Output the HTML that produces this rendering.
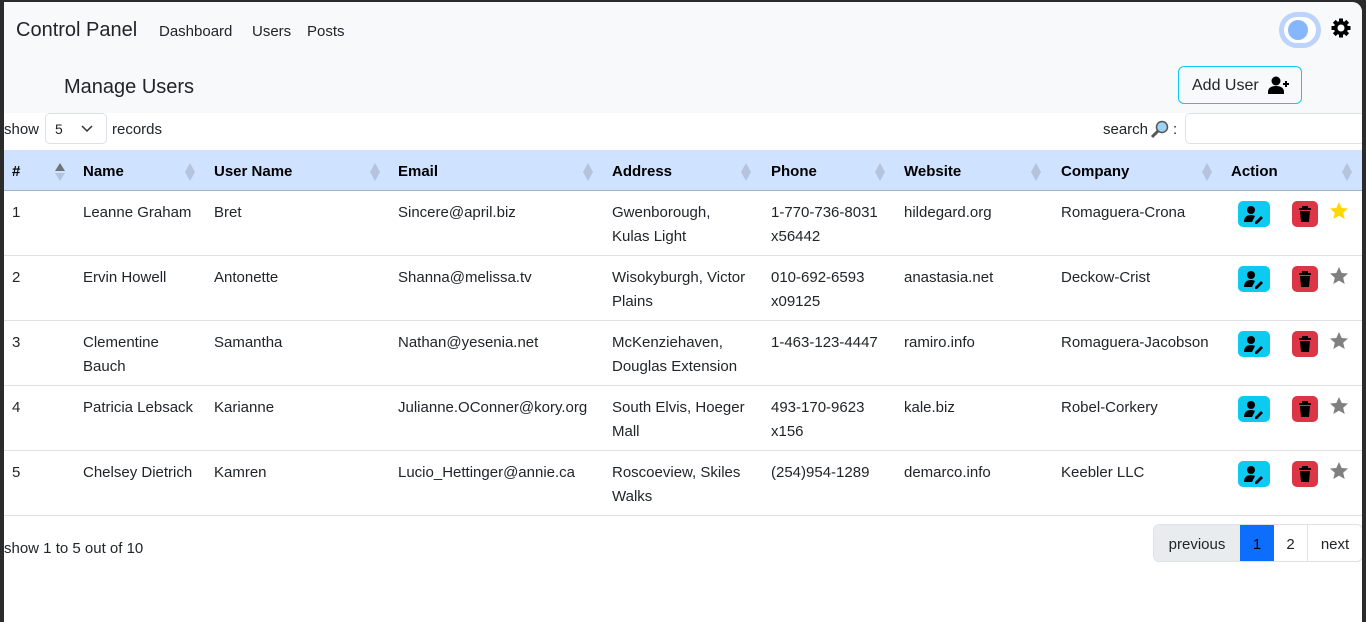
<!DOCTYPE html>
<html><head><meta charset="utf-8"><style>
*{box-sizing:border-box;margin:0;padding:0}
html,body{width:1366px;height:622px;overflow:hidden;background:#2b2b2b;font-family:"Liberation Sans",Arial,sans-serif;color:#212529}
#page{position:absolute;left:4px;top:2px;width:1358px;height:620px;background:#fff;border-top-right-radius:10px;overflow:hidden}
.top{position:absolute;left:0;top:0;width:100%;height:111px;background:#f8f9fa}
.a{position:absolute;white-space:nowrap}
.t{font-size:15px;line-height:24px}
.th{position:absolute;left:0;top:148px;width:100%;height:41px;background:#cfe2ff;border-bottom:1px solid #9fb2d0}
.th b{position:absolute;top:13px;font-size:15px;color:#000}
.sort{position:absolute;top:12px;width:14px;height:20px}
.row{position:absolute;left:0;width:100%;height:65px;border-bottom:1px solid #dee2e6}
.row span{position:absolute;top:10px;font-size:15px;line-height:24px;white-space:nowrap;color:#212529}
.eb{position:absolute;left:1234px;top:10px;width:32px;height:26px;background:#0dcaf0;border-radius:5px}
.db{position:absolute;left:1288px;top:10px;width:26px;height:26px;background:#dc3545;border-radius:5px}
.st{position:absolute;left:1325px;top:10px}
</style></head><body>
<div id="page">
<div class="top"></div>
<div class="a" style="left:12px;top:17px;font-size:20px">Control Panel</div>
<div class="a t" style="left:155px;top:18px">Dashboard</div>
<div class="a t" style="left:248px;top:18px">Users</div>
<div class="a t" style="left:303px;top:18px">Posts</div>
<svg class="a" style="left:1275px;top:10px" width="42" height="36"><rect x="2.5" y="2.5" width="37" height="31" rx="15.5" fill="#fff" stroke="#bcd3fb" stroke-width="5"/><circle cx="19" cy="18" r="10" fill="#86b7fe"/></svg>
<svg class="a" style="left:1327px;top:16px" width="20" height="20" viewBox="0 0 20 20"><g fill="#000"><circle cx="10" cy="10" r="7"/><rect x="8" y="0.5" width="4" height="19"/><rect x="0.5" y="8" width="19" height="4"/><rect x="8" y="0.5" width="4" height="19" transform="rotate(45 10 10)"/><rect x="8" y="0.5" width="4" height="19" transform="rotate(-45 10 10)"/></g><circle cx="10" cy="10" r="3.5" fill="#fff"/></svg>
<div class="a" style="left:60px;top:74px;font-size:20px">Manage Users</div>
<div class="a" style="left:1174px;top:64px;width:124px;height:38px;border:1px solid #0dcaf0;border-radius:6px;font-size:16px;line-height:38px;padding-left:13px">Add User
<svg style="position:absolute;left:89px;top:9px" width="24" height="18" viewBox="0 0 24 18"><circle cx="8" cy="5" r="4.5"/><path d="M0 18v-2c0-4 3-6 8-6s8 2 8 6v2z"/><path d="M18 5v6M15 8h6" stroke="#000" stroke-width="2"/></svg></div>
<div class="a t" style="left:0;top:116px">show</div>
<div class="a" style="left:41px;top:111px;width:62px;height:31px;border:1px solid #dee2e6;border-radius:5px;font-size:14px;line-height:31px;padding-left:9px">5<svg style="position:absolute;left:35px;top:11px" width="12" height="8"><path d="M1 1l5 5 5-5" fill="none" stroke="#333" stroke-width="1.5"/></svg></div>
<div class="a t" style="left:108px;top:116px">records</div>
<div class="a t" style="left:1099px;top:116px">search</div>
<svg class="a" style="left:1146px;top:117px" width="20" height="20" viewBox="0 0 20 20"><path d="M2 18l6-6" stroke="#555" stroke-width="3"/><circle cx="12" cy="8" r="5.5" fill="#9fd3f5" stroke="#555" stroke-width="1.5"/></svg>
<div class="a t" style="left:1169px;top:116px">:</div>
<div class="a" style="left:1181px;top:111px;width:180px;height:31px;border:1px solid #dee2e6;border-radius:5px;background:#fff"></div>

<div class="th">
<b style="left:8px">#</b><b style="left:79px">Name</b><b style="left:210px">User Name</b><b style="left:394px">Email</b><b style="left:608px">Address</b><b style="left:767px">Phone</b><b style="left:900px">Website</b><b style="left:1057px">Company</b><b style="left:1227px">Action</b>
<svg class="sort" style="left:49px"><path d="M7 1l5 8H2z" fill="#6c757d"/><path d="M7 19l5-8H2z" fill="#b5c4dc"/></svg>
<svg class="sort" style="left:179px"><path d="M7 1l5 9-5 9-5-9z" fill="#b5c4dc"/></svg>
<svg class="sort" style="left:364px"><path d="M7 1l5 9-5 9-5-9z" fill="#b5c4dc"/></svg>
<svg class="sort" style="left:577px"><path d="M7 1l5 9-5 9-5-9z" fill="#b5c4dc"/></svg>
<svg class="sort" style="left:735px"><path d="M7 1l5 9-5 9-5-9z" fill="#b5c4dc"/></svg>
<svg class="sort" style="left:869px"><path d="M7 1l5 9-5 9-5-9z" fill="#b5c4dc"/></svg>
<svg class="sort" style="left:1025px"><path d="M7 1l5 9-5 9-5-9z" fill="#b5c4dc"/></svg>
<svg class="sort" style="left:1196px"><path d="M7 1l5 9-5 9-5-9z" fill="#b5c4dc"/></svg>
<svg class="sort" style="left:1336px"><path d="M7 1l5 9-5 9-5-9z" fill="#b5c4dc"/></svg>
</div>

<div class="row" style="top:189px"><span style="left:8px">1</span><span style="left:79px">Leanne Graham</span><span style="left:210px">Bret</span><span style="left:394px">Sincere@april.biz</span><span style="left:608px">Gwenborough,<br>Kulas Light</span><span style="left:767px">1-770-736-8031<br>x56442</span><span style="left:900px">hildegard.org</span><span style="left:1057px">Romaguera-Crona</span>
<div class="eb"><svg width="32" height="26"><circle cx="13" cy="9" r="4"/><path d="M6 21c0-5 3-7 7-7 2 0 3 .5 4 1l-3 6z"/><path d="M17 21l6-6 2 2-6 6h-2z"/></svg></div><div class="db"><svg width="26" height="26"><path d="M7 7h12v2H7zM10 5h6v2h-6zM8 10h10l-1 11H9z"/></svg></div><svg class="st" width="20" height="20" viewBox="0 0 20 20"><path d="M10 1l2.7 6 6.3.5-4.8 4.2 1.5 6.3L10 14.6 4.3 18l1.5-6.3L1 7.5 7.3 7z" fill="#ffd700"/></svg></div>

<div class="row" style="top:254px"><span style="left:8px">2</span><span style="left:79px">Ervin Howell</span><span style="left:210px">Antonette</span><span style="left:394px">Shanna@melissa.tv</span><span style="left:608px">Wisokyburgh, Victor<br>Plains</span><span style="left:767px">010-692-6593<br>x09125</span><span style="left:900px">anastasia.net</span><span style="left:1057px">Deckow-Crist</span>
<div class="eb"><svg width="32" height="26"><circle cx="13" cy="9" r="4"/><path d="M6 21c0-5 3-7 7-7 2 0 3 .5 4 1l-3 6z"/><path d="M17 21l6-6 2 2-6 6h-2z"/></svg></div><div class="db"><svg width="26" height="26"><path d="M7 7h12v2H7zM10 5h6v2h-6zM8 10h10l-1 11H9z"/></svg></div><svg class="st" width="20" height="20" viewBox="0 0 20 20"><path d="M10 1l2.7 6 6.3.5-4.8 4.2 1.5 6.3L10 14.6 4.3 18l1.5-6.3L1 7.5 7.3 7z" fill="#808080"/></svg></div>

<div class="row" style="top:319px"><span style="left:8px">3</span><span style="left:79px">Clementine<br>Bauch</span><span style="left:210px">Samantha</span><span style="left:394px">Nathan@yesenia.net</span><span style="left:608px">McKenziehaven,<br>Douglas Extension</span><span style="left:767px">1-463-123-4447</span><span style="left:900px">ramiro.info</span><span style="left:1057px">Romaguera-Jacobson</span>
<div class="eb"><svg width="32" height="26"><circle cx="13" cy="9" r="4"/><path d="M6 21c0-5 3-7 7-7 2 0 3 .5 4 1l-3 6z"/><path d="M17 21l6-6 2 2-6 6h-2z"/></svg></div><div class="db"><svg width="26" height="26"><path d="M7 7h12v2H7zM10 5h6v2h-6zM8 10h10l-1 11H9z"/></svg></div><svg class="st" width="20" height="20" viewBox="0 0 20 20"><path d="M10 1l2.7 6 6.3.5-4.8 4.2 1.5 6.3L10 14.6 4.3 18l1.5-6.3L1 7.5 7.3 7z" fill="#808080"/></svg></div>

<div class="row" style="top:384px"><span style="left:8px">4</span><span style="left:79px">Patricia Lebsack</span><span style="left:210px">Karianne</span><span style="left:394px">Julianne.OConner@kory.org</span><span style="left:608px">South Elvis, Hoeger<br>Mall</span><span style="left:767px">493-170-9623<br>x156</span><span style="left:900px">kale.biz</span><span style="left:1057px">Robel-Corkery</span>
<div class="eb"><svg width="32" height="26"><circle cx="13" cy="9" r="4"/><path d="M6 21c0-5 3-7 7-7 2 0 3 .5 4 1l-3 6z"/><path d="M17 21l6-6 2 2-6 6h-2z"/></svg></div><div class="db"><svg width="26" height="26"><path d="M7 7h12v2H7zM10 5h6v2h-6zM8 10h10l-1 11H9z"/></svg></div><svg class="st" width="20" height="20" viewBox="0 0 20 20"><path d="M10 1l2.7 6 6.3.5-4.8 4.2 1.5 6.3L10 14.6 4.3 18l1.5-6.3L1 7.5 7.3 7z" fill="#808080"/></svg></div>

<div class="row" style="top:449px"><span style="left:8px">5</span><span style="left:79px">Chelsey Dietrich</span><span style="left:210px">Kamren</span><span style="left:394px">Lucio_Hettinger@annie.ca</span><span style="left:608px">Roscoeview, Skiles<br>Walks</span><span style="left:767px">(254)954-1289</span><span style="left:900px">demarco.info</span><span style="left:1057px">Keebler LLC</span>
<div class="eb"><svg width="32" height="26"><circle cx="13" cy="9" r="4"/><path d="M6 21c0-5 3-7 7-7 2 0 3 .5 4 1l-3 6z"/><path d="M17 21l6-6 2 2-6 6h-2z"/></svg></div><div class="db"><svg width="26" height="26"><path d="M7 7h12v2H7zM10 5h6v2h-6zM8 10h10l-1 11H9z"/></svg></div><svg class="st" width="20" height="20" viewBox="0 0 20 20"><path d="M10 1l2.7 6 6.3.5-4.8 4.2 1.5 6.3L10 14.6 4.3 18l1.5-6.3L1 7.5 7.3 7z" fill="#808080"/></svg></div>

<div class="a t" style="left:0;top:535px">show 1 to 5 out of 10</div>
<div class="a" style="left:1149px;top:522px;height:38px;border:1px solid #dee2e6;border-radius:6px;overflow:hidden;display:flex;font-size:15px;line-height:40px;background:#fff">
<div style="width:86px;background:#e9ecef;text-align:center;color:#212529">previous</div>
<div style="width:34px;background:#0d6efd;text-align:center;color:#000">1</div>
<div style="width:34px;text-align:center;border-right:1px solid #dee2e6">2</div>
<div style="width:54px;text-align:center">next</div>
</div>
</div>
</body></html>
